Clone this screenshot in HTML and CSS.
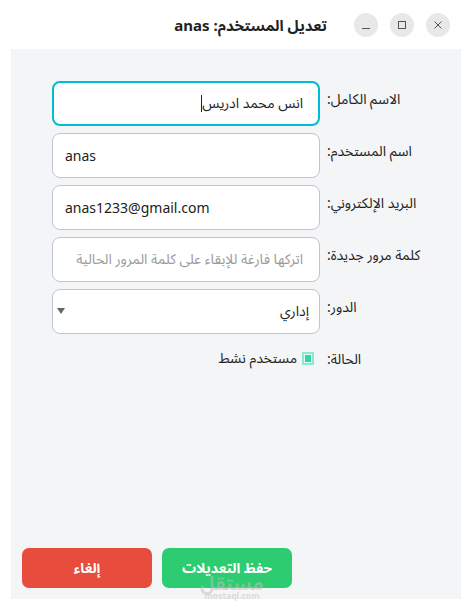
FILE: index.html
```html
<!DOCTYPE html>
<html lang="ar">
<head>
<meta charset="utf-8">
<title>تعديل المستخدم</title>
<link rel="stylesheet" href="styles.css">
</head>
<body>
<div class="window">
  <header class="titlebar">
    <h1 class="title" dir="rtl">تعديل المستخدم: anas</h1>
    <div class="controls">
      <span class="ctl"><svg width="24" height="24" viewBox="0 0 24 24"><path d="M8 15.5h8" stroke="#555" stroke-width="1" fill="none"/></svg></span>
      <span class="ctl"><svg width="24" height="24" viewBox="0 0 24 24"><rect x="8.5" y="8.5" width="7" height="7" stroke="#555" stroke-width="1" fill="none"/></svg></span>
      <span class="ctl"><svg width="24" height="24" viewBox="0 0 24 24"><path d="M8.5 8.5l7 7M15.5 8.5l-7 7" stroke="#555" stroke-width="1" fill="none"/></svg></span>
    </div>
  </header>
  <main class="panel">
    <form class="form" dir="rtl">
      <label class="lbl">الاسم الكامل:</label>
      <div class="field focused"><span class="val">انس محمد ادريس</span><span class="caret"></span></div>

      <label class="lbl">اسم المستخدم:</label>
      <div class="field ltr"><span class="val">anas</span></div>

      <label class="lbl">البريد الإلكتروني:</label>
      <div class="field ltr"><span class="val">anas1233@gmail.com</span></div>

      <label class="lbl">كلمة مرور جديدة:</label>
      <div class="field"><span class="ph">اتركها فارغة للإبقاء على كلمة المرور الحالية</span></div>

      <label class="lbl">الدور:</label>
      <div class="field select"><span class="val">إداري</span><span class="arrow"></span></div>

      <label class="lbl lbl-status">الحالة:</label>
      <div class="status"><span class="check"><span class="check-in"></span></span><span class="check-text">مستخدم نشط</span></div>
    </form>
    <footer class="actions">
      <button class="btn cancel" type="button">إلغاء</button>
      <button class="btn save" type="button">حفظ التعديلات</button>
    </footer>
    <div class="watermark"><span class="wm-ar">مستقل</span><span class="wm-en">mostaql.com</span></div>
  </main>
</div>
</body>
</html>
```
FILE: styles.css
```css
* { box-sizing: border-box; }
html, body { margin: 0; padding: 0; background: #ffffff; }
body {
  width: 472px;
  height: 610px;
  font-family: "Noto Sans", "Noto Sans Arabic", "DejaVu Sans", sans-serif;
  color: #222;
}
.window {
  display: flex;
  flex-direction: column;
  height: 610px;
}
.titlebar {
  height: 49px;
  display: flex;
  align-items: center;
  justify-content: flex-end;
  padding: 0 22px 0 0;
  direction: ltr;
}
.title {
  margin: 0 27px 0 0;
  font-size: 15px;
  font-weight: 700;
  color: #222;
  position: relative;
  top: 1px;
}
.controls {
  display: flex;
  gap: 12px;
}
.ctl {
  width: 24px;
  height: 24px;
  border-radius: 50%;
  background: #e8e8e8;
  display: flex;
}
.panel {
  position: relative;
  margin: 0 11px 11px;
  height: 550px;
  background: #f4f5f7;
  display: flex;
  flex-direction: column;
  padding: 32px 0 11px 41px;
}
.form {
  display: grid;
  grid-template-columns: 1fr 268px;
  column-gap: 7px;
  row-gap: 7px;
}
.lbl {
  text-align: left;
  font-size: 14px;
  line-height: 18px;
  padding-top: 9px;
  color: #222;
}
.field {
  height: 45px;
  background: #fff;
  border: 1px solid #bfc6cd;
  border-radius: 8px;
  display: flex;
  align-items: center;
  padding: 0 16px 0 12px;
  font-size: 14px;
  position: relative;
}
.field.ltr { direction: ltr; }
.field.focused {
  border: 2px solid #00bcd4;
  padding: 0 15px 0 11px;
}
.caret {
  width: 1px;
  height: 17px;
  background: #222;
}
.ph { color: #9a9a9a; font-size: 14px; }
.select .val { flex: 1; }
.select { padding-right: 10px; }
.arrow {
  width: 0; height: 0;
  border-left: 4px solid transparent;
  border-right: 4px solid transparent;
  border-top: 6px solid #666;
  margin-left: -8px;
  position: relative;
  top: -1px;
}
.lbl-status { padding-top: 9px; }
.status {
  display: flex;
  align-items: center;
  gap: 5px;
  padding: 7px 6px 0 0;
  font-size: 14px;
  line-height: 20px;
  align-self: start;
}
.check {
  width: 12px;
  height: 13px;
  border: 2px solid #8ee8cf;
  background: #e6faf4;
  display: flex;
  align-items: center;
  justify-content: center;
}
.check-in {
  width: 6px;
  height: 7px;
  background: #2fd6a6;
}
.actions {
  margin-top: auto;
  margin-left: -30px;
  display: flex;
  gap: 10px;
  direction: ltr;
}
.btn {
  width: 130px;
  height: 40px;
  border: 0;
  border-radius: 7px;
  color: #fff;
  font-family: inherit;
  font-size: 14px;
  font-weight: 700;
}
.cancel { background: #e74c3c; }
.save { background: #2ecc71; }
.watermark {
  position: absolute;
  left: 192px;
  top: 528px;
  width: 58px;
  display: flex;
  flex-direction: column;
  align-items: center;
  pointer-events: none;
  color: rgba(190, 190, 190, 0.5);
  font-weight: 700;
}
.wm-ar { font-size: 19px; line-height: 13px; height: 13px; }
.wm-en { font-size: 8.5px; line-height: 8px; height: 8px; margin-top: 2px; }
```
